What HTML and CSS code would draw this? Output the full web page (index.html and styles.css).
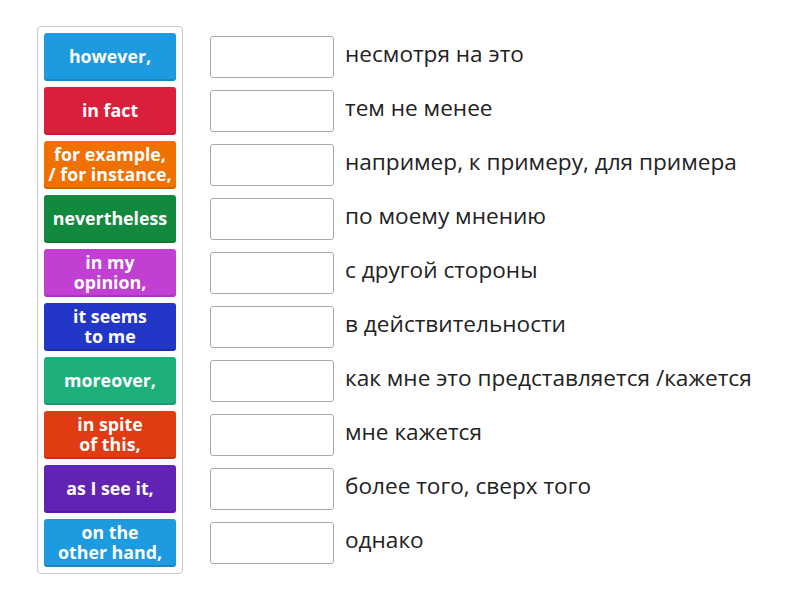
FILE: index.html
```html
<!DOCTYPE html>
<html lang="ru">
<head>
<meta charset="utf-8">
<title>Match up</title>
<link rel="stylesheet" href="styles.css">
</head>
<body>
<div class="board">
  <div class="panel">
    <div class="tile c-blue">however,</div>
    <div class="tile c-red">in fact</div>
    <div class="tile c-orange">for example,<br>/ for instance,</div>
    <div class="tile c-green">nevertheless</div>
    <div class="tile c-magenta">in my<br>opinion,</div>
    <div class="tile c-navy">it seems<br>to me</div>
    <div class="tile c-teal">moreover,</div>
    <div class="tile c-vermilion">in spite<br>of this,</div>
    <div class="tile c-purple">as I see it,</div>
    <div class="tile c-blue">on the<br>other hand,</div>
  </div>
  <div class="targets">
    <div class="row"><div class="slot"></div><span class="label">несмотря на это</span></div>
    <div class="row"><div class="slot"></div><span class="label">тем не менее</span></div>
    <div class="row"><div class="slot"></div><span class="label">например, к примеру, для примера</span></div>
    <div class="row"><div class="slot"></div><span class="label">по моему мнению</span></div>
    <div class="row"><div class="slot"></div><span class="label">с другой стороны</span></div>
    <div class="row"><div class="slot"></div><span class="label">в действительности</span></div>
    <div class="row"><div class="slot"></div><span class="label">как мне это представляется /кажется</span></div>
    <div class="row"><div class="slot"></div><span class="label">мне кажется</span></div>
    <div class="row"><div class="slot"></div><span class="label">более того, сверх того</span></div>
    <div class="row"><div class="slot"></div><span class="label">однако</span></div>
  </div>
</div>
</body>
</html>
```
FILE: styles.css
```css
html, body {
  margin: 0;
  padding: 0;
  background: #ffffff;
}

body {
  font-family: "Open Sans", "Liberation Sans", sans-serif;
}

.board {
  display: flex;
  align-items: flex-start;
  padding: 26px 0 0 37px;
}

.panel {
  display: flex;
  flex-direction: column;
  gap: 6px;
  padding: 6px;
  border: 1px solid #c9c9c9;
  border-radius: 4px;
  width: 132px;
}

.tile {
  height: 48px;
  display: flex;
  align-items: center;
  justify-content: center;
  text-align: center;
  color: #ffffff;
  font-weight: 700;
  font-size: 17.8px;
  line-height: 20px;
  border-radius: 3px;
  box-shadow: inset 0 -2px 0 rgba(0, 0, 0, 0.12);
  white-space: nowrap;
  padding-bottom: 2px;
  box-sizing: border-box;
}

.c-blue { background: #1d9ae0; }
.c-red { background: #dc1e3d; }
.c-orange { background: #f07000; }
.c-green { background: #13893f; }
.c-magenta { background: #c23fd3; }
.c-navy { background: #2236c7; }
.c-teal { background: #1db07b; }
.c-vermilion { background: #e03b12; }
.c-purple { background: #6223b5; }

.targets {
  display: flex;
  flex-direction: column;
  gap: 6px;
  margin-left: 27px;
  padding-top: 7px;
}

.row {
  height: 48px;
  display: flex;
  align-items: center;
}

.slot {
  width: 122px;
  height: 40px;
  border: 1px solid #a9a9a9;
  border-radius: 3px;
  background: #ffffff;
  flex: none;
}

.label {
  margin-left: 11px;
  margin-bottom: 6px;
  font-size: 22.6px;
  line-height: 28px;
  color: #222222;
  white-space: nowrap;
}
```
